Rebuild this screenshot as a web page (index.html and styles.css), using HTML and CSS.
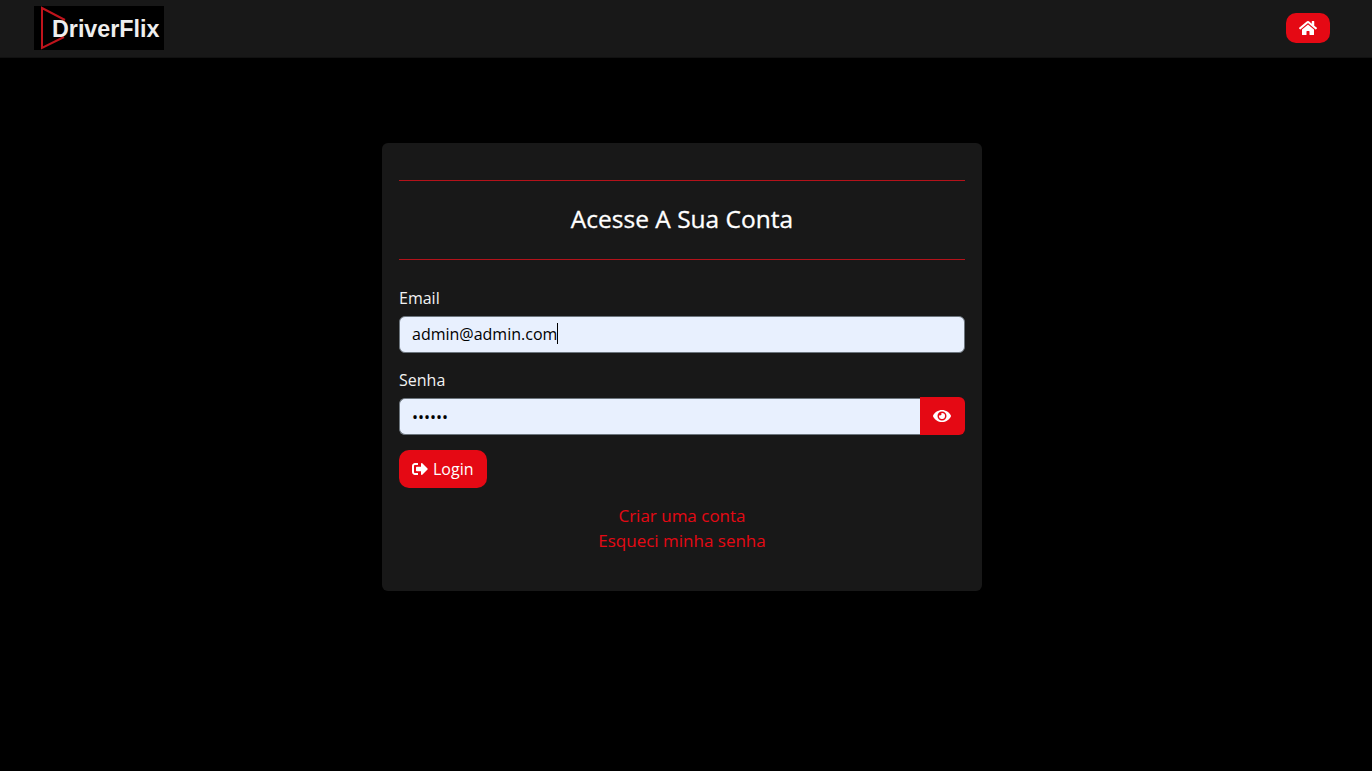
FILE: index.html
```html
<!DOCTYPE html>
<html lang="pt-BR">
  <head>
    <meta charset="UTF-8">
    <meta name="viewport" content="width=device-width, initial-scale=1.0">
    <title>DriverFlix - Login</title>
    <link rel="stylesheet" href="styles.css">
  </head>
  <body>
    <header class="navbar">
      <a class="logo" href="#">
        <svg class="logo-mark" viewBox="0 0 32 44" aria-hidden="true">
          <path d="M31 14 L8 2 L8 42 L30 31" fill="none" stroke="#c0141c" stroke-width="2"/>
        </svg>
        <span class="logo-text">DriverFlix</span>
      </a>
      <a class="btn-home" href="#" aria-label="Home">
        <svg class="icon-home" viewBox="0 0 576 512" aria-hidden="true">
          <path fill="currentColor" d="M280.37 148.26L96 300.11V464a16 16 0 0 0 16 16l112.06-.29a16 16 0 0 0 15.92-16V368a16 16 0 0 1 16-16h64a16 16 0 0 1 16 16v95.64a16 16 0 0 0 16 16.05L464 480a16 16 0 0 0 16-16V300L295.67 148.26a12.19 12.19 0 0 0-15.3 0zM571.6 251.47L488 182.56V44.05a12 12 0 0 0-12-12h-56a12 12 0 0 0-12 12v72.61L318.47 43a48 48 0 0 0-61 0L4.34 251.47a12 12 0 0 0-1.6 16.9l25.5 31A12 12 0 0 0 45.15 301l235.22-193.74a12.19 12.19 0 0 1 15.3 0L530.9 301a12 12 0 0 0 16.9-1.6l25.5-31a12 12 0 0 0-1.7-16.93z"/>
        </svg>
      </a>
    </header>

    <div class="page">
      <main class="login-card">
        <hr class="divider">
        <h1 class="login-title">Acesse A Sua Conta</h1>
        <hr class="divider">
        <form class="login-form">
          <label class="field-label" for="email">Email</label>
          <div class="input-wrap">
            <input class="field-input" id="email" type="text" value="admin@admin.com">
            <span class="caret"></span>
          </div>
          <label class="field-label" for="senha">Senha</label>
          <div class="input-group">
            <input class="field-input" id="senha" type="password" value="123456">
            <button class="btn-eye" type="button" aria-label="Mostrar senha">
              <svg class="icon-eye" viewBox="0 0 576 512" aria-hidden="true">
                <path fill="currentColor" d="M572.52 241.4C518.29 135.59 410.93 64 288 64S57.68 135.64 3.48 241.41a32.35 32.35 0 0 0 0 29.19C57.71 376.41 165.07 448 288 448s230.32-71.64 284.52-177.41a32.35 32.35 0 0 0 0-29.19zM288 400a144 144 0 1 1 144-144 143.93 143.93 0 0 1-144 144zm0-240a95.31 95.31 0 0 0-25.31 3.79 47.85 47.85 0 0 1-66.9 66.9A95.78 95.78 0 1 0 288 160z"/>
              </svg>
            </button>
          </div>
          <button class="btn-login" type="button">
            <svg class="icon-login" viewBox="0 0 512 512" aria-hidden="true">
              <path fill="currentColor" d="M497 273L329 441c-15 15-41 4.5-41-17v-96H152c-13.3 0-24-10.7-24-24v-96c0-13.3 10.7-24 24-24h136V88c0-21.4 25.9-32 41-17l168 168c9.3 9.4 9.3 24.6 0 34zM192 436v-40c0-6.6-5.4-12-12-12H96c-17.7 0-32-14.3-32-32V160c0-17.7 14.3-32 32-32h84c6.6 0 12-5.4 12-12V76c0-6.6-5.4-12-12-12H96c-53 0-96 43-96 96v192c0 53 43 96 96 96h84c6.6 0 12-5.4 12-12z"/>
            </svg>
            Login
          </button>
        </form>
        <div class="login-links">
          <a href="#">Criar uma conta</a>
          <a href="#">Esqueci minha senha</a>
        </div>
      </main>
    </div>
  </body>
</html>
```

FILE: styles.css
```css
* {
  box-sizing: border-box;
}
body {
  margin: 0;
  min-height: 771px;
  background: #000;
  color: #fff;
  font-family: "Open Sans", sans-serif;
  font-size: 16px;
  line-height: 24px;
}
.navbar {
  display: flex;
  align-items: center;
  justify-content: space-between;
  height: 58px;
  padding: 0 42px 2px 34px;
  background: #181818;
  border-bottom: 1px solid #111;
}
.logo {
  display: flex;
  align-items: center;
  width: 130px;
  height: 44px;
  background: #000;
  text-decoration: none;
}
.logo-mark {
  flex: none;
  width: 32px;
  height: 44px;
  margin-right: -14px;
}
.logo-text {
  color: #eee;
  font-family: "Liberation Sans", Arial, sans-serif;
  font-size: 23.3px;
  font-weight: 700;
  line-height: 44px;
  padding-top: 2px;
}
.btn-home {
  display: flex;
  align-items: center;
  justify-content: center;
  width: 44px;
  height: 30px;
  color: #fff;
  background: #e50914;
  border-radius: 10px;
}
.icon-home {
  width: 18px;
  height: 16px;
}
.page {
  padding-right: 8px;
}
.login-card {
  width: 600px;
  height: 448px;
  margin: 85px auto 0;
  padding: 37px 17px 0;
  background: #181818;
  border-radius: 6px;
}
.divider {
  height: 1px;
  margin: 0;
  background: #b3121a;
  border: 0;
}
.login-title {
  margin: 0;
  height: 78px;
  font-size: 24.5px;
  font-weight: 500;
  line-height: 76px;
  text-align: center;
  -webkit-text-stroke: 0.3px #fff;
}
.login-form {
  display: flex;
  flex-direction: column;
  align-items: flex-start;
  padding-top: 26px;
}
.field-label {
  margin-bottom: 5px;
  color: #f2f2f2;
}
.input-wrap {
  position: relative;
  width: 100%;
  padding-top: 1px;
  margin-bottom: 15px;
}
.field-input {
  display: block;
  width: 100%;
  height: 37px;
  padding: 0 12px;
  color: #000;
  background: #e8f0fe;
  border: 1px solid #6c757d;
  border-radius: 6px;
  font-family: inherit;
  font-size: 16px;
  outline: 0;
}
.input-wrap .field-input {
  padding-bottom: 2px;
}
.caret {
  position: absolute;
  top: 8px;
  left: 158px;
  width: 1px;
  height: 21px;
  background: #000;
}
.input-group {
  display: flex;
  width: 100%;
  margin-bottom: 15px;
}
.input-group .field-input {
  flex: 1;
  margin-top: 1px;
  border-right: 0;
  border-radius: 6px 0 0 6px;
}
.btn-eye {
  display: flex;
  align-items: center;
  justify-content: center;
  width: 45px;
  height: 38px;
  padding: 0 2px 0 0;
  color: #fff;
  background: #e50914;
  border: 0;
  border-radius: 0 6px 6px 0;
}
.icon-eye {
  width: 18px;
  height: 16px;
}
.btn-login {
  display: flex;
  align-items: center;
  gap: 5px;
  width: 88px;
  height: 38px;
  padding: 0 0 0 13px;
  color: #fff;
  background: #e50914;
  border: 0;
  border-radius: 10px;
  font-family: inherit;
  font-size: 16px;
}
.icon-login {
  width: 16px;
  height: 16px;
}
.login-links {
  display: flex;
  flex-direction: column;
  align-items: center;
  margin-top: 15px;
}
.login-links a {
  color: #e50914;
  font-size: 17px;
  line-height: 25px;
  text-decoration: none;
}
```
